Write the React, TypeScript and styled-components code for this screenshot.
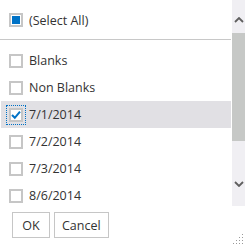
import React from 'react';
import styled, { createGlobalStyle } from 'styled-components';

interface Item {
  label: string;
  checked?: boolean;
  focused?: boolean;
}

const items: Item[] = [
  { label: 'Blanks' },
  { label: 'Non Blanks' },
  { label: '7/1/2014', checked: true, focused: true },
  { label: '7/2/2014' },
  { label: '7/3/2014' },
  { label: '8/6/2014' },
];

const CheckIcon = () => (
  <svg width="10" height="10" viewBox="0 0 10 10">
    <path d="M1 5 L3.8 7.8 L9 1.6" fill="none" stroke="#0072c6" strokeWidth="2" />
  </svg>
);

const Chevron: React.FC<{ down?: boolean }> = ({ down }) => (
  <svg width="10" height="6" viewBox="0 0 10 6">
    <path
      d={down ? 'M1 1 L5 5 L9 1' : 'M1 5 L5 1 L9 5'}
      fill="none"
      stroke="#5f5f5f"
      strokeWidth="1.8"
    />
  </svg>
);

const App: React.FC = () => {
  return (
    <>
      <GlobalStyle />
      <Panel>
        <ScrollArea>
          <ListColumn>
            <SelectAllRow>
              <Box>
                <Indeterminate />
              </Box>
              <Label>(Select All)</Label>
            </SelectAllRow>
            <Separator />
            <Rows>
              {items.map((item) => (
                <Row key={item.label} selected={item.checked}>
                  <Box focused={item.focused}>{item.checked && <CheckIcon />}</Box>
                  <Label>{item.label}</Label>
                </Row>
              ))}
            </Rows>
          </ListColumn>
          <Scrollbar>
            <Arrow>
              <Chevron />
            </Arrow>
            <Thumb />
            <Track />
            <Arrow down>
              <Chevron down />
            </Arrow>
          </Scrollbar>
        </ScrollArea>
        <Footer>
          <Button>OK</Button>
          <Button>Cancel</Button>
        </Footer>
        <Grip>
          <svg width="11" height="11" viewBox="0 0 11 11">
            {[
              [9, 0], [9, 3], [6, 3], [9, 6], [6, 6], [3, 6], [9, 9], [6, 9], [3, 9], [0, 9],
            ].map(([x, y]) => (
              <rect key={`${x}-${y}`} x={x} y={y} width="1" height="1" fill="#9a9a9a" />
            ))}
          </svg>
        </Grip>
      </Panel>
    </>
  );
};

const GlobalStyle = createGlobalStyle`
  body {
    margin: 0;
    background: #ffffff;
    font-family: "Open Sans", "Noto Sans", sans-serif;
  }
`;

const Panel = styled.div`
  position: relative;
  width: 245px;
  height: 247px;
  background: #ffffff;
  overflow: hidden;
`;

const ScrollArea = styled.div`
  display: flex;
  height: 206px;
  overflow: hidden;
`;

const ListColumn = styled.div`
  width: 232px;
  display: flex;
  flex-direction: column;
  overflow: hidden;
`;

const SelectAllRow = styled.div`
  display: flex;
  align-items: center;
  flex-shrink: 0;
  height: 39px;
  padding-left: 9px;
  padding-top: 1px;
  box-sizing: border-box;
`;

const Separator = styled.div`
  flex-shrink: 0;
  height: 1px;
  width: 231px;
  background: #c8c8c8;
`;

const Rows = styled.div`
  display: flex;
  flex-direction: column;
  flex-shrink: 0;
  padding: 7px 1px 0 1px;
`;

const Row = styled.div<{ selected?: boolean }>`
  display: flex;
  align-items: center;
  flex-shrink: 0;
  height: 27px;
  padding-left: 8px;
  background: ${(p) => (p.selected ? '#e1e0e4' : 'transparent')};
`;

const Box = styled.div<{ focused?: boolean }>`
  width: 14px;
  height: 14px;
  box-sizing: border-box;
  border: 2px solid #c6c6c6;
  background: #ffffff;
  display: flex;
  align-items: center;
  justify-content: center;
  flex-shrink: 0;
  outline: ${(p) => (p.focused ? '1px dotted #0072c6' : 'none')};
  outline-offset: 2px;
`;

const Indeterminate = styled.div`
  width: 8px;
  height: 8px;
  background: #0072c6;
`;

const Label = styled.span`
  margin-left: 6px;
  font-size: 12.5px;
  color: #333333;
  white-space: nowrap;
`;

const Scrollbar = styled.div`
  width: 13px;
  height: 206px;
  background: #f0eff3;
  display: flex;
  flex-direction: column;
`;

const Arrow = styled.div<{ down?: boolean }>`
  height: 33px;
  display: flex;
  align-items: center;
  justify-content: center;
  padding: ${(p) => (p.down ? '0 0 12px 0' : '7px 0 0 0')};
  box-sizing: border-box;
`;

const Thumb = styled.div`
  height: 108px;
  background: #c6c8c6;
`;

const Track = styled.div`
  flex: 1;
`;

const Footer = styled.div`
  display: flex;
  gap: 4px;
  padding: 6px 0 0 12px;
`;

const Button = styled.button`
  height: 26px;
  padding: 0 7px;
  min-width: 38px;
  background: #ffffff;
  border: 1px solid #c6c6c6;
  font-family: "Open Sans", "Noto Sans", sans-serif;
  font-size: 12.5px;
  color: #333333;
`;

const Grip = styled.div`
  position: absolute;
  right: 1px;
  bottom: 2px;
  width: 11px;
  height: 11px;
  display: flex;
`;

export default App;
